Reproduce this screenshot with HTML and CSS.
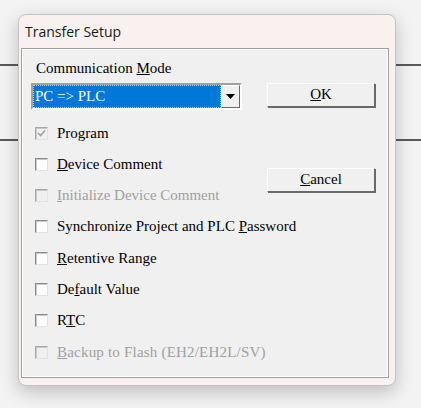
FILE: index.html
```html
<!DOCTYPE html>
<html lang="en">
<head>
<meta charset="UTF-8">
<title>Transfer Setup</title>
<link rel="stylesheet" href="styles.css">
</head>
<body>

<div class="dialog">
    <div class="titlebar">Transfer Setup</div>
    <div class="client">
        <div class="label">Communication <u>M</u>ode</div>

        <div class="combo">
            <div class="combo_value">PC =&gt; PLC</div>
            <div class="combo_btn">
                <svg width="9" height="5" viewBox="0 0 9 5"><polygon points="0,0 9,0 4.5,5" fill="#000"/></svg>
            </div>
        </div>
        <div class="btn btn_ok"><u>O</u>K</div>

        <div class="check locked">
            <span class="box"><svg width="11" height="11" viewBox="0 0 11 11"><polyline points="2,5 4.5,7.5 9,2.5" fill="none" stroke="#a0a0a0" stroke-width="1.6"/></svg></span>
            <span class="text">Program</span>
        </div>
        <div class="check">
            <span class="box"></span>
            <span class="text"><u>D</u>evice Comment</span>
        </div>
        <div class="btn btn_cancel"><u>C</u>ancel</div>
        <div class="check disabled">
            <span class="box"></span>
            <span class="text"><u>I</u>nitialize Device Comment</span>
        </div>
        <div class="check wide">
            <span class="box"></span>
            <span class="text">Synchronize Project and PLC <u>P</u>assword</span>
        </div>
        <div class="check">
            <span class="box"></span>
            <span class="text"><u>R</u>etentive Range</span>
        </div>
        <div class="check">
            <span class="box"></span>
            <span class="text">De<u>f</u>ault Value</span>
        </div>
        <div class="check">
            <span class="box"></span>
            <span class="text">R<u>T</u>C</span>
        </div>
        <div class="check disabled wide">
            <span class="box"></span>
            <span class="text spaced"><u>B</u>ackup to Flash (EH2/EH2L/SV)</span>
        </div>
    </div>
</div>

</body>
</html>
```

FILE: styles.css
```css
/* page behind the dialog */
body {
    margin: 0;
    width: 421px;
    height: 408px;
    padding: 14px 0 0 18px;
    box-sizing: border-box;
    background:
        linear-gradient(to bottom, transparent 64px, #5a5a5a 64px, #5a5a5a 66px, transparent 66px,
                        transparent 139px, #5a5a5a 139px, #5a5a5a 141px, transparent 141px),
        #f3f3f3;
    overflow: hidden;
}

.dialog {
    width: 378px;
    height: 372px;
    box-sizing: border-box;
    border: 1px solid #c4c4c4;
    border-radius: 8px;
    background: #f9f1f0;
    box-shadow: 0 6px 18px rgba(0, 0, 0, 0.22);
    display: flex;
    flex-direction: column;
    overflow: hidden;
}

.titlebar {
    height: 33px;
    padding-left: 6px;
    display: flex;
    align-items: center;
    font-family: "Open Sans", "Noto Sans", sans-serif;
    font-size: 14px;
    color: #1a1a1a;
}

.client {
    flex: 1;
    margin: 0 6px 7px 2px;
    border: 1px solid #a0a0a0;
    box-shadow: inset -1px -1px 0 #ffffff, inset 1px 1px 0 #ffffff;
    background: #f0f0f0;
    padding: 11px 0 0 9px;
    display: grid;
    grid-template-columns: 236px 108px;
    grid-template-rows: 23px 34.4px repeat(8, 31.3px);
    font-family: "Liberation Serif", "Times New Roman", serif;
    font-size: 15px;
    color: #000;
}

.label {
    grid-column: 1 / 3;
    margin-left: 5px;
    line-height: 17px;
}

/* combo box */
.combo {
    width: 211px;
    height: 27px;
    box-sizing: border-box;
    border: 2px solid;
    border-color: #a0a0a0 #ffffff #ffffff #a0a0a0;
    background: #ffffff;
    display: flex;
}
.combo_value {
    flex: 1;
    background: #0078d7;
    color: #fff;
    border: 1px dotted #d8c79a;
    line-height: 21px;
    padding-left: 1px;
}
.combo_btn {
    width: 19px;
    box-sizing: border-box;
    border: 1px solid;
    border-color: #ffffff #696969 #696969 #ffffff;
    background: #f0f0f0;
    display: flex;
    align-items: center;
    justify-content: center;
}

/* push buttons */
.btn {
    width: 108px;
    height: 24px;
    box-sizing: border-box;
    border: 1px solid;
    border-color: #ffffff #696969 #696969 #ffffff;
    box-shadow: 1px 1px 0 #696969;
    background: #f0f0f0;
    text-align: center;
    line-height: 21px;
    align-self: start;
}
.btn_cancel {
    grid-column: 2;
    grid-row: 4 / 6;
    align-self: center;
}

/* check boxes */
.check {
    grid-column: 1;
    display: flex;
    align-items: center;
    gap: 9px;
    padding-left: 4px;
    white-space: nowrap;
}
.check.wide {
    grid-column: 1 / 3;
}
.spaced {
    letter-spacing: 0.2px;
}
.box {
    flex-shrink: 0;
    width: 13px;
    height: 13px;
    box-sizing: border-box;
    border: 1px solid;
    border-color: #8a8a8a #e3e3e3 #e3e3e3 #8a8a8a;
    box-shadow: inset 1px 1px 0 #c8c8c8;
    background: #ffffff;
    display: flex;
    align-items: center;
    justify-content: center;
}
.disabled .box,
.locked .box {
    background: #f0f0f0;
    border-color: #a8a8a8 #e3e3e3 #e3e3e3 #a8a8a8;
}
.disabled .text {
    color: #a0a0a0;
}
```
